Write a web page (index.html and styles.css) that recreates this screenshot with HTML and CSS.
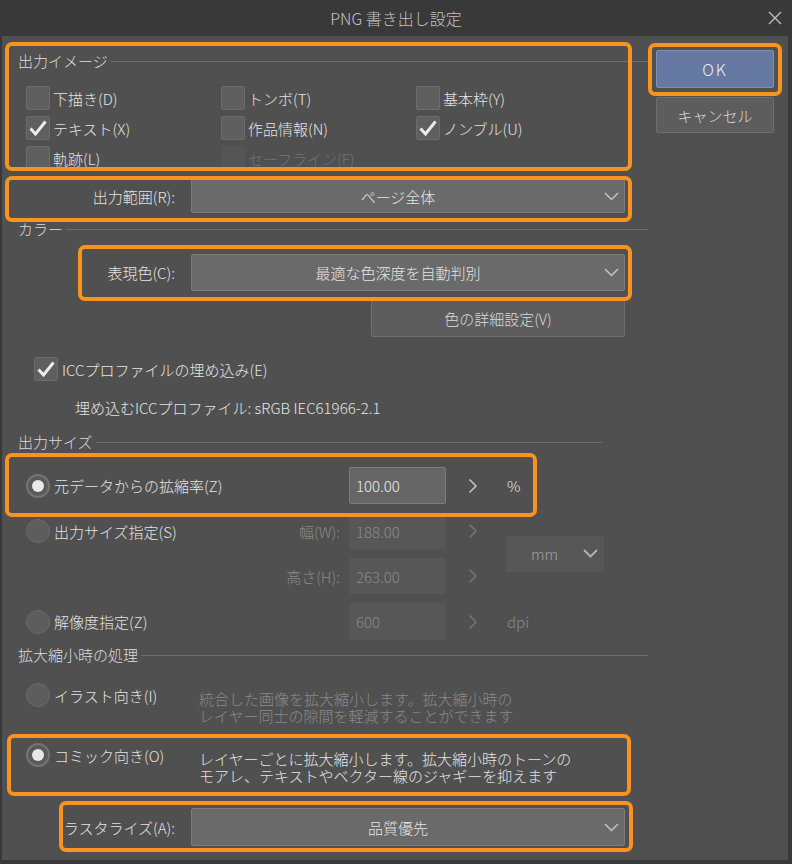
FILE: index.html
```html
<!DOCTYPE html>
<html lang="ja">
<head>
  <meta charset="UTF-8">
  <title>PNG 書き出し設定</title>
  <link rel="stylesheet" href="styles.css">
</head>
<body>
  <div class="window">
    <div class="titlebar">
      <span></span>
      <span class="title">PNG 書き出し設定</span>
      <svg class="close" width="14" height="14" viewBox="0 0 14 14"><path d="M1 1 L13 13 M13 1 L1 13" stroke="#bdbdbd" stroke-width="1.4" fill="none"/></svg>
    </div>

    <div class="body">
      <div class="main">
        <!-- 出力イメージ -->
        <div class="group-title first"><span>出力イメージ</span><i></i></div>
        <div class="check-grid">
          <div class="check"><span class="box"></span>下描き(D)</div>
          <div class="check"><span class="box"></span>トンボ(T)</div>
          <div class="check"><span class="box"></span>基本枠(Y)</div>
          <div class="check"><span class="box"><svg width="24" height="24" viewBox="0 0 24 24"><path d="M4.5 12.5 L9.5 18 L19.5 5.5" stroke="#ececec" stroke-width="3" fill="none"/></svg></span>テキスト(X)</div>
          <div class="check"><span class="box"></span>作品情報(N)</div>
          <div class="check"><span class="box"><svg width="24" height="24" viewBox="0 0 24 24"><path d="M4.5 12.5 L9.5 18 L19.5 5.5" stroke="#ececec" stroke-width="3" fill="none"/></svg></span>ノンブル(U)</div>
          <div class="check"><span class="box"></span>軌跡(L)</div>
          <div class="check disabled"><span class="box"></span>セーフライン(F)</div>
        </div>

        <div class="field-row range">
          <span class="field-label">出力範囲(R):</span>
          <div class="select"><span>ページ全体</span><svg width="15" height="9" viewBox="0 0 15 9"><path d="M1 1 L7.5 7.5 L14 1" stroke="#c4c4c4" stroke-width="1.5" fill="none"/></svg></div>
        </div>

        <!-- カラー -->
        <div class="group-title color"><span>カラー</span><i></i></div>
        <div class="field-row tall">
          <span class="field-label">表現色(C):</span>
          <div class="select"><span>最適な色深度を自動判別</span><svg width="15" height="9" viewBox="0 0 15 9"><path d="M1 1 L7.5 7.5 L14 1" stroke="#c4c4c4" stroke-width="1.5" fill="none"/></svg></div>
        </div>
        <button class="btn detail">色の詳細設定(V)</button>

        <div class="check icc"><span class="box"><svg width="24" height="24" viewBox="0 0 24 24"><path d="M4.5 12.5 L9.5 18 L19.5 5.5" stroke="#ececec" stroke-width="3" fill="none"/></svg></span>ICCプロファイルの埋め込み(E)</div>
        <div class="profile">埋め込むICCプロファイル: sRGB IEC61966-2.1</div>

        <!-- 出力サイズ -->
        <div class="group-title size"><span>出力サイズ</span><i></i></div>
        <div class="size-grid">
          <div class="opt"><span class="radio on"></span>元データからの拡縮率(Z)</div>
          <div class="input">100.00</div>
          <div class="arrow"><svg width="10" height="16" viewBox="0 0 10 16"><path d="M1.5 1.5 L8 8 L1.5 14.5" stroke="#c4c4c4" stroke-width="1.5" fill="none"/></svg></div>
          <div class="unit">%</div>

          <div class="opt"><span class="radio"></span>出力サイズ指定(S)<span class="sub-label">幅(W):</span></div>
          <div class="input off">188.00</div>
          <div class="arrow"><svg width="10" height="16" viewBox="0 0 10 16"><path d="M1.5 1.5 L8 8 L1.5 14.5" stroke="#767676" stroke-width="1.5" fill="none"/></svg></div>
          <div class="unit-select"><span>mm</span><svg width="15" height="9" viewBox="0 0 15 9"><path d="M1 1 L7.5 7.5 L14 1" stroke="#b4b4b4" stroke-width="1.8" fill="none"/></svg></div>

          <div class="opt"><span class="sub-label">高さ(H):</span></div>
          <div class="input off">263.00</div>
          <div class="arrow"><svg width="10" height="16" viewBox="0 0 10 16"><path d="M1.5 1.5 L8 8 L1.5 14.5" stroke="#767676" stroke-width="1.5" fill="none"/></svg></div>

          <div class="opt"><span class="radio"></span>解像度指定(Z)</div>
          <div class="input off">600</div>
          <div class="arrow"><svg width="10" height="16" viewBox="0 0 10 16"><path d="M1.5 1.5 L8 8 L1.5 14.5" stroke="#767676" stroke-width="1.5" fill="none"/></svg></div>
          <div class="unit off">dpi</div>
        </div>

        <!-- 拡大縮小時の処理 -->
        <div class="group-title scale"><span>拡大縮小時の処理</span><i></i></div>
        <div class="scale-row first">
          <div class="opt"><span class="radio"></span>イラスト向き(I)</div>
          <div class="desc off">
            <div>統合した画像を拡大縮小します。拡大縮小時の</div>
            <div>レイヤー同士の隙間を軽減することができます</div>
          </div>
        </div>
        <div class="scale-row">
          <div class="opt"><span class="radio on"></span>コミック向き(O)</div>
          <div class="desc">
            <div>レイヤーごとに拡大縮小します。拡大縮小時のトーンの</div>
            <div>モアレ、テキストやベクター線のジャギーを抑えます</div>
          </div>
        </div>
        <div class="field-row tall raster">
          <span class="field-label">ラスタライズ(A):</span>
          <div class="select"><span>品質優先</span><svg width="15" height="9" viewBox="0 0 15 9"><path d="M1 1 L7.5 7.5 L14 1" stroke="#c4c4c4" stroke-width="1.5" fill="none"/></svg></div>
        </div>
      </div>

      <div class="side">
        <button class="btn primary">OK</button>
        <button class="btn cancel">キャンセル</button>
      </div>
    </div>

    <!-- 注釈の枠 -->
    <div class="mark" style="left:5px;top:42px;width:627px;height:129px"></div>
    <div class="mark" style="left:648px;top:43px;width:134px;height:53px"></div>
    <div class="mark" style="left:5px;top:176px;width:627px;height:46px"></div>
    <div class="mark" style="left:78px;top:245px;width:554px;height:56px"></div>
    <div class="mark" style="left:5px;top:453px;width:532px;height:64px"></div>
    <div class="mark" style="left:7px;top:734px;width:624px;height:62px"></div>
    <div class="mark" style="left:59px;top:801px;width:574px;height:51px"></div>
  </div>
</body>
</html>
```

FILE: styles.css
```css
body {
  margin: 0;
  background-color: #393939;
  font-family: "Noto Sans CJK JP", "Noto Sans", sans-serif;
  font-size: 15px;
  font-weight: 300;
  color: #e4e4e4;
}
.window {
  position: relative;
  width: 792px;
  height: 864px;
  overflow: hidden;
}
.titlebar {
  height: 36px;
  display: grid;
  grid-template-columns: 1fr auto 1fr;
  align-items: center;
  color: #c2c2c2;
  font-size: 16px;
}
.titlebar .close {
  justify-self: end;
  margin-right: 10px;
}
.body {
  margin-left: 2px;
  width: 786px;
  height: 824px;
  background-color: #505050;
  display: flex;
}
.main {
  width: 630px;
  padding-left: 16px;
}
.side {
  margin-left: 8px;
  width: 118px;
  padding-top: 14px;
  display: flex;
  flex-direction: column;
}

/* グループ見出し */
.group-title {
  height: 20px;
  display: flex;
  align-items: center;
  color: #dcdcdc;
  line-height: 20px;
}
.group-title i {
  flex: 1;
  height: 1px;
  margin-left: 3px;
  background-color: #6e6e6e;
}
.group-title.first { margin-top: 15px; }
.group-title.color { margin-top: 6px; }
.group-title.size { margin-top: 14px; }
.group-title.size i { margin-right: 46px; }
.group-title.scale { margin-top: 5px; }

/* チェックボックス */
.check-grid {
  margin-top: 12px;
  padding-left: 8px;
  display: grid;
  grid-template-columns: 195px 195px 195px;
  grid-auto-rows: 30px;
}
.check {
  display: flex;
  align-items: center;
  gap: 3px;
  white-space: nowrap;
}
.check .box {
  width: 24px;
  height: 24px;
  box-sizing: border-box;
  border: 1px solid #6c6c6c;
  border-radius: 2px;
  background-color: #5f5f5f;
  flex-shrink: 0;
}
.check .box svg {
  display: block;
  margin: -1px;
}
.check.disabled {
  color: #747474;
}
.check.disabled .box {
  background-color: #555;
  border-color: #555;
}
.check.icc {
  margin-top: 20px;
  height: 24px;
  padding-left: 16px;
  gap: 4px;
}
.profile {
  margin-top: 17px;
  height: 20px;
  line-height: 20px;
  padding-left: 57px;
}

/* ラベル + プルダウン */
.field-row {
  display: grid;
  grid-template-columns: 157px 434px;
  column-gap: 16px;
  align-items: center;
}
.field-row.range {
  margin-top: 6px;
  height: 34px;
}
.field-row.tall {
  margin-top: 15px;
  height: 37px;
}
.field-row.raster {
  margin-top: 5px;
  height: 38px;
}
.field-label {
  text-align: right;
  white-space: nowrap;
}
.select {
  height: 100%;
  box-sizing: border-box;
  background-color: #6a6a6a;
  border: 1px solid #7c7c7c;
  border-radius: 2px;
  display: flex;
  align-items: center;
}
.select span {
  flex: 1;
  text-align: center;
}
.select svg {
  margin-right: 5px;
}

/* ボタン */
.btn {
  font-family: inherit;
  font-weight: 300;
  font-size: 15px;
  color: #dadada;
  background-color: #5d5d5d;
  border: 1px solid #6f6f6f;
  border-radius: 2px;
  padding: 0;
  box-sizing: border-box;
}
.btn.detail {
  display: block;
  margin-top: 9px;
  margin-left: 353px;
  width: 254px;
  height: 37px;
}
.btn.primary {
  height: 38px;
  background-color: #6478a2;
  border-color: #7e8fb6;
  color: #f0f0f0;
  font-size: 16px;
  letter-spacing: 2px;
}
.btn.cancel {
  margin-top: 9px;
  height: 36px;
}

/* 出力サイズ */
.size-grid {
  margin-top: 15px;
  display: grid;
  grid-template-columns: 331px 97px 60px auto;
  grid-template-rows: 37px 36px 36px 37px;
  row-gap: 9px;
  align-items: center;
}
.opt {
  display: flex;
  align-items: center;
  gap: 4px;
  padding-left: 8px;
  height: 100%;
  white-space: nowrap;
}
.sub-label {
  margin-left: auto;
  padding-right: 9px;
  color: #8a8a8a;
}
.radio {
  width: 24px;
  height: 24px;
  box-sizing: border-box;
  border-radius: 50%;
  border: 1px solid #6a6a6a;
  background-color: #5d5d5d;
  display: flex;
  align-items: center;
  justify-content: center;
  flex-shrink: 0;
}
.radio.on {
  border: 2px solid #747474;
  background-color: #5a5a5a;
}
.radio.on::after {
  content: "";
  width: 12px;
  height: 12px;
  border-radius: 50%;
  background-color: #e8e8e8;
}
.input {
  height: 100%;
  box-sizing: border-box;
  background-color: #666;
  border: 1px solid #7c7c7c;
  border-radius: 2px;
  padding-left: 6px;
  display: flex;
  align-items: center;
  color: #eaeaea;
}
.input.off {
  background-color: #575757;
  border-color: #575757;
  color: #8a8a8a;
}
.arrow {
  padding-left: 22px;
  display: flex;
  align-items: center;
}
.unit {
  color: #e6e6e6;
  padding-left: 1px;
}
.unit.off {
  color: #8a8a8a;
}
.unit-select {
  grid-column: 4;
  grid-row: 2 / span 2;
  width: 98px;
  height: 36px;
  background-color: #575757;
  display: flex;
  align-items: center;
  color: #a2a2a2;
}
.unit-select span {
  flex: 1;
  text-align: center;
}
.unit-select svg {
  margin-right: 6px;
}

/* 拡大縮小時の処理 */
.scale-row {
  height: 60px;
  display: grid;
  grid-template-columns: 181px 1fr;
  align-items: start;
}
.scale-row.first {
  margin-top: 18px;
}
.scale-row .opt {
  height: 24px;
}
.desc {
  margin-top: 8px;
  font-family: "Liberation Sans", "Noto Sans CJK JP", sans-serif;
  font-size: 15px;
  line-height: 17px;
  white-space: nowrap;
}
.desc.off {
  color: #8a8a8a;
}

/* 注釈 */
.mark {
  position: absolute;
  box-sizing: border-box;
  border: 4px solid #f7931e;
  border-radius: 7px;
  pointer-events: none;
}
```
